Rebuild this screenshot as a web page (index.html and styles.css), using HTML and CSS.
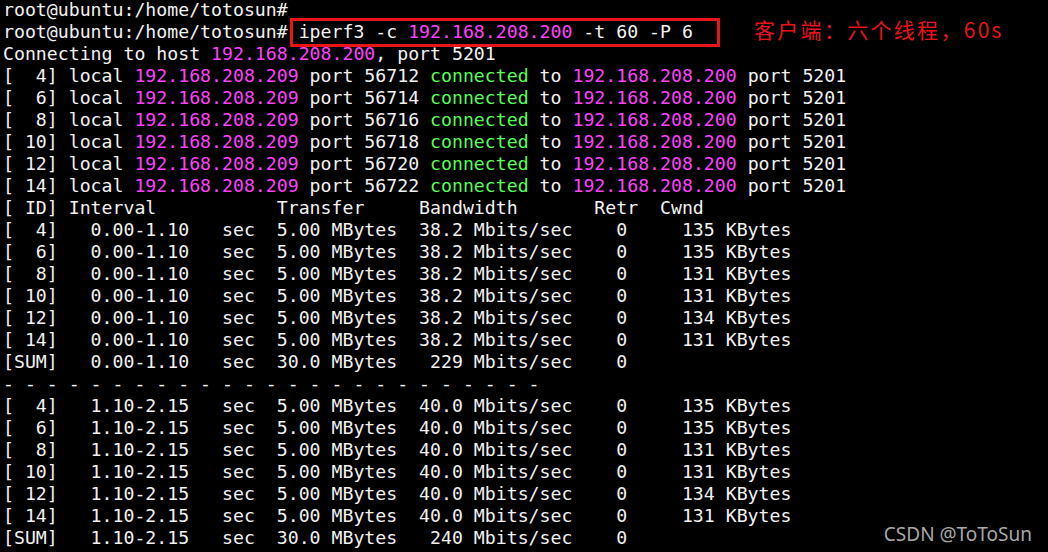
FILE: index.html
```html
<!DOCTYPE html>
<html lang="zh-CN">
<head>
    <meta charset="UTF-8">
    <title>iperf3 client</title>
    <link rel="stylesheet" href="styles.css">
</head>
<body>
    <div class="screen">
<pre class="term">root@ubuntu:/home/totosun#
root@ubuntu:/home/totosun# iperf3 -c <span class="ip">192.168.208.200</span> -t 60 -P 6
Connecting to host <span class="ip">192.168.208.200</span>, port 5201
[  4] local <span class="ip">192.168.208.209</span> port 56712 <span class="ok">connected</span> to <span class="ip">192.168.208.200</span> port 5201
[  6] local <span class="ip">192.168.208.209</span> port 56714 <span class="ok">connected</span> to <span class="ip">192.168.208.200</span> port 5201
[  8] local <span class="ip">192.168.208.209</span> port 56716 <span class="ok">connected</span> to <span class="ip">192.168.208.200</span> port 5201
[ 10] local <span class="ip">192.168.208.209</span> port 56718 <span class="ok">connected</span> to <span class="ip">192.168.208.200</span> port 5201
[ 12] local <span class="ip">192.168.208.209</span> port 56720 <span class="ok">connected</span> to <span class="ip">192.168.208.200</span> port 5201
[ 14] local <span class="ip">192.168.208.209</span> port 56722 <span class="ok">connected</span> to <span class="ip">192.168.208.200</span> port 5201
[ ID] Interval           Transfer     Bandwidth       Retr  Cwnd
[  4]   0.00-1.10   sec  5.00 MBytes  38.2 Mbits/sec    0     135 KBytes
[  6]   0.00-1.10   sec  5.00 MBytes  38.2 Mbits/sec    0     135 KBytes
[  8]   0.00-1.10   sec  5.00 MBytes  38.2 Mbits/sec    0     131 KBytes
[ 10]   0.00-1.10   sec  5.00 MBytes  38.2 Mbits/sec    0     131 KBytes
[ 12]   0.00-1.10   sec  5.00 MBytes  38.2 Mbits/sec    0     134 KBytes
[ 14]   0.00-1.10   sec  5.00 MBytes  38.2 Mbits/sec    0     131 KBytes
[SUM]   0.00-1.10   sec  30.0 MBytes   229 Mbits/sec    0
- - - - - - - - - - - - - - - - - - - - - - - - -
[  4]   1.10-2.15   sec  5.00 MBytes  40.0 Mbits/sec    0     135 KBytes
[  6]   1.10-2.15   sec  5.00 MBytes  40.0 Mbits/sec    0     135 KBytes
[  8]   1.10-2.15   sec  5.00 MBytes  40.0 Mbits/sec    0     131 KBytes
[ 10]   1.10-2.15   sec  5.00 MBytes  40.0 Mbits/sec    0     131 KBytes
[ 12]   1.10-2.15   sec  5.00 MBytes  40.0 Mbits/sec    0     134 KBytes
[ 14]   1.10-2.15   sec  5.00 MBytes  40.0 Mbits/sec    0     131 KBytes
[SUM]   1.10-2.15   sec  30.0 MBytes   240 Mbits/sec    0</pre>
        <div class="mark-box"></div>
        <div class="note">客户端：六个线程，60s</div>
        <div class="watermark">CSDN @ToToSun</div>
    </div>
</body>
</html>
```

FILE: styles.css
```css
html, body {
    margin: 0;
    padding: 0;
    background: #000;
}

.screen {
    position: relative;
    width: 1048px;
    height: 552px;
    overflow: hidden;
    background: #000;
}

.term {
    margin: 0;
    padding: 0 0 0 3px;
    margin-top: -1px;
    font-family: "DejaVu Sans Mono", monospace;
    font-size: 18.2px;
    line-height: 22px;
    color: #f2f2f2;
    white-space: pre;
}

.ip {
    color: #ff40ff;
}

.ok {
    color: #55ff55;
}

/* red frame around the command */
.mark-box {
    position: absolute;
    left: 290px;
    top: 18px;
    width: 424px;
    height: 23px;
    border: 3px solid #e8141b;
}

.note {
    position: absolute;
    left: 754px;
    top: 14px;
    font-family: "Noto Sans CJK SC", sans-serif;
    font-size: 21px;
    letter-spacing: 2.3px;
    line-height: 30px;
    color: #e8141b;
}

.watermark {
    position: absolute;
    right: 16px;
    bottom: 6px;
    font-family: "Noto Sans", sans-serif;
    font-size: 19px;
    line-height: 24px;
    color: #a8a8a8;
}
```
